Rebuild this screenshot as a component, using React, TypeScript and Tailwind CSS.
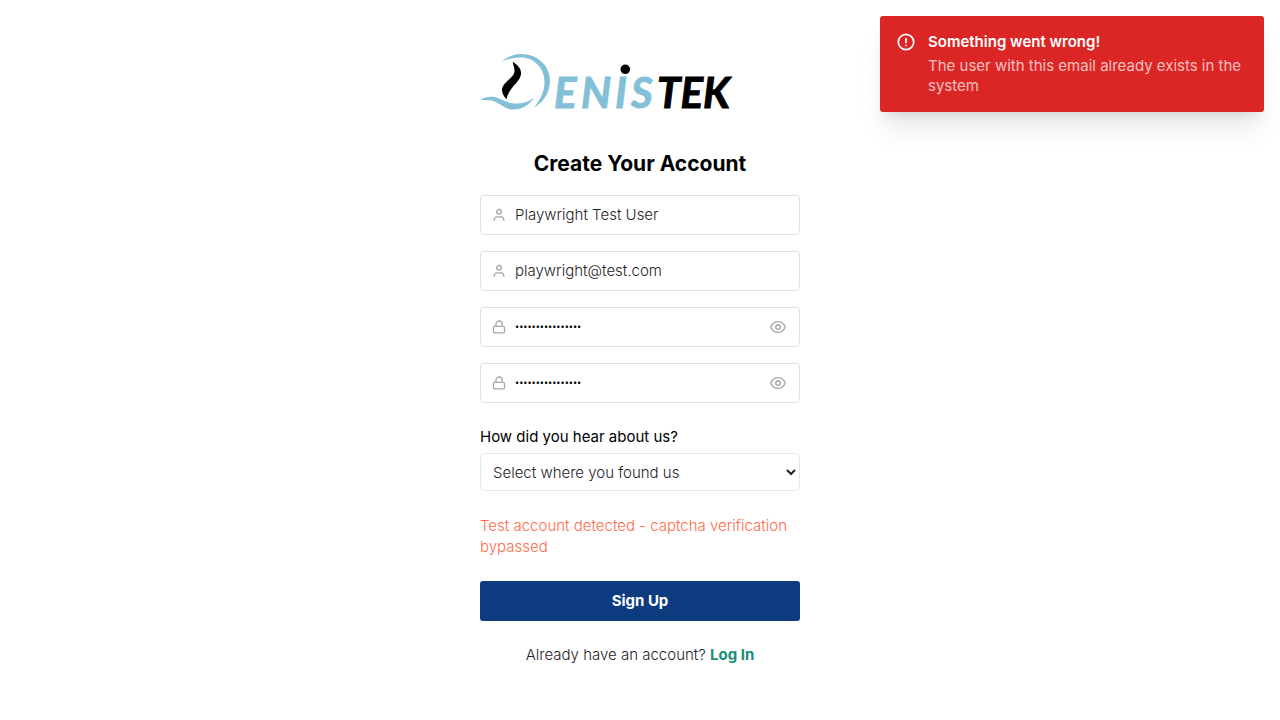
import { useState } from "react";

function Logo() {
  return (
    <svg viewBox="0 0 252 56" className="h-14 w-[252px] overflow-visible" role="img" aria-label="Denistek">
      <g fill="#83c0d8">
        <path d="M21.7 7.7C28 2.5 34 0 41 0C58 0 70 12 70 27C70 38 64 48 54 53.7C60 46 64.5 38 64.5 28C64.5 14 54 3.5 41 3.5C34 3.5 27 5 21.7 7.7Z" />
        <path d="M0 46C5 43 9 42.3 13 42.8C20 43.6 26 49 34 49.5C42 50 48 48 54.3 43.7C49 51 42 55.5 33 55.5C24 55.5 18 47 10 46.3C6 46 3 45.7 0 46Z" />
      </g>
      <path d="M32.7 7.7C38 11 41.5 15 41 20C40.5 28 28 34 26.7 45.3C23.5 42 22 39 22 36C22 28 34.5 24 34.5 17C34.5 13 33 11 32.7 7.7Z" />
      <circle cx="145.3" cy="15.3" r="4.8" />
      <g fontFamily="Lato, sans-serif" fontSize="42" fontWeight="700" fontStyle="italic" strokeWidth="1">
        <text y="54" fill="#83c0d8" stroke="#83c0d8">
          <tspan x="74">E</tspan>
          <tspan x="101">N</tspan>
          <tspan x="135">I</tspan>
          <tspan x="151">S</tspan>
        </text>
        <text x="177" y="54" fill="#000" stroke="#000">TEK</text>
      </g>
    </svg>
  );
}

function UserIcon() {
  return (
    <svg viewBox="0 0 16 16" className="size-4 shrink-0" fill="none" stroke="currentColor" strokeWidth="1.3" strokeLinecap="round" strokeLinejoin="round" aria-hidden="true">
      <circle cx="8" cy="4.8" r="2.4" />
      <path d="M3.2 13.3v-.6a2.8 2.8 0 0 1 2.8-2.8h4a2.8 2.8 0 0 1 2.8 2.8v.6" />
    </svg>
  );
}

function LockIcon() {
  return (
    <svg viewBox="0 0 16 16" className="size-4 shrink-0" fill="none" stroke="currentColor" strokeWidth="1.3" strokeLinecap="round" strokeLinejoin="round" aria-hidden="true">
      <rect x="2.5" y="7.3" width="11" height="6.5" rx="1.3" />
      <path d="M5 7.3V5a3 3 0 0 1 6 0v2.3" />
    </svg>
  );
}

function EyeIcon() {
  return (
    <svg viewBox="0 0 16 16" className="size-4" fill="none" stroke="currentColor" strokeWidth="1.4" strokeLinecap="round" strokeLinejoin="round" aria-hidden="true">
      <path d="M.7 8C2.2 4.4 4.9 2.6 8 2.6S13.8 4.4 15.3 8C13.8 11.6 11.1 13.4 8 13.4S2.2 11.6.7 8Z" />
      <circle cx="8" cy="8" r="2.2" />
    </svg>
  );
}

function Field({ label, type, value }: { label: string; type: string; value: string }) {
  const [text, setText] = useState(value);
  const [shown, setShown] = useState(false);
  const secret = type === "password";
  return (
    <div className="flex h-10 items-center gap-2 rounded border border-[#e0e1e4] pr-[13px] pl-2.5 text-[#a6a7ae]">
      {secret ? <LockIcon /> : <UserIcon />}
      <input
        aria-label={label}
        type={shown ? "text" : type}
        value={text}
        onChange={(e) => setText(e.target.value)}
        className={
          secret
            ? "min-w-0 flex-1 font-['Open_Sans',sans-serif] text-[11px] text-black outline-none"
            : "min-w-0 flex-1 text-[15px] font-light text-[#1f2328] outline-none"
        }
      />
      {secret && (
        <button type="button" aria-label="Show password" onClick={() => setShown(!shown)}>
          <EyeIcon />
        </button>
      )}
    </div>
  );
}

function Toast() {
  return (
    <div role="alert" className="absolute top-4 right-4 flex w-96 gap-3 rounded-[3px] bg-[#dc2626] p-4 text-white shadow-xl">
      <svg viewBox="0 0 20 20" className="size-5 shrink-0" fill="none" stroke="currentColor" strokeWidth="1.7" strokeLinecap="round" aria-hidden="true">
        <circle cx="10" cy="10" r="7.7" />
        <path d="M10 6.5v4M10 13.4v.1" />
      </svg>
      <div>
        <p className="text-[15px] leading-5 font-semibold">Something went wrong!</p>
        <p className="mt-1 text-[15px] leading-5 text-[#f6c0c0]">The user with this email already exists in the system</p>
      </div>
    </div>
  );
}

export default function App() {
  return (
    <main className="min-h-screen bg-white px-4 pt-[54px] font-['Inter',sans-serif] text-black">
      <Toast />
      <form className="mx-auto flex w-full max-w-80 flex-col" onSubmit={(e) => e.preventDefault()}>
        <Logo />
        <h1 className="mt-10 text-center text-[21px] leading-7 font-bold">Create Your Account</h1>
        <div className="mt-[17px] flex flex-col gap-4">
          <Field label="Full name" type="text" value="Playwright Test User" />
          <Field label="Email" type="email" value="playwright@test.com" />
          <Field label="Password" type="password" value="TestPassword123!" />
          <Field label="Confirm password" type="password" value="TestPassword123!" />
        </div>
        <label htmlFor="source" className="mt-6 text-[15px] leading-5">How did you hear about us?</label>
        <select id="source" className="mt-1.5 h-[38px] w-full rounded-md border border-[#e2e8f0] bg-white pl-2 text-[15px] font-light text-[#1f2328]">
          <option>Select where you found us</option>
        </select>
        <p className="mt-6 text-[15px] leading-[21px] font-light text-[#ff6b4a]">Test account detected - captcha verification bypassed</p>
        <button type="submit" className="mt-6 h-10 rounded-[3px] bg-[#0c3c7f] text-[15px] font-bold text-white">Sign Up</button>
        <p className="mt-6 text-center text-[15px] leading-5 font-light text-[#1f2328]">
          Already have an account? <a href="#login" className="font-bold text-[#168e79]">Log In</a>
        </p>
      </form>
    </main>
  );
}
